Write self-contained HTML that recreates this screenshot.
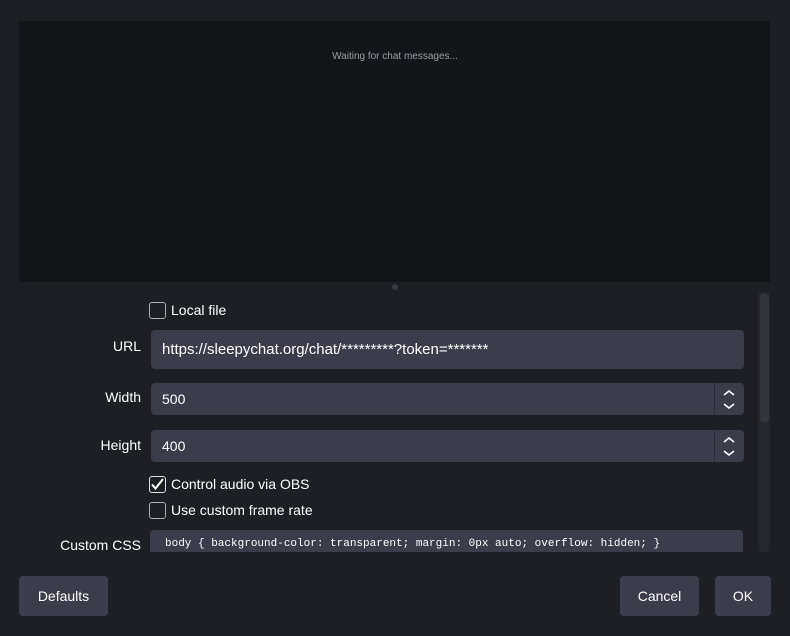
<!DOCTYPE html>
<html><head><style>
*{box-sizing:border-box;margin:0;padding:0}
body{width:790px;height:636px;background:#1e1f24;font-family:"Liberation Sans",sans-serif;color:#fff;position:relative;overflow:hidden;font-size:14px}
.a{position:absolute}
.prev{left:19px;top:21px;width:751px;height:261px;background:#141519}
.inp{background:#3b3d4b;border-radius:4px;height:32px;left:151px;width:593px;padding-left:11px;line-height:32px;font-size:14px}
.lbl{right:649px;font-size:14px;text-align:right}
.cb{width:17px;height:17px;border:1.5px solid #aaa;border-radius:3px;left:149px}
.btn{background:#3b3d4b;border-radius:4px;height:40px;top:576px;line-height:40px;text-align:center;font-size:14px}
.spin{right:46px;width:30px;height:32px;border-left:1px solid #2a2b33;}
</style></head><body>
<div class="a prev"></div>
<div class="a" style="left:0;width:790px;top:51px;text-align:center;font-size:10px;color:#9a9ba3">Waiting for chat messages...</div>
<div class="a" style="left:392px;top:284px;width:6px;height:6px;border-radius:3px;background:#3a3b42"></div>

<div class="a cb" style="top:302px"></div>
<div class="a" style="left:171px;top:302px">Local file</div>

<div class="a lbl" style="top:338px">URL</div>
<div class="a inp" style="top:330px;height:39px;line-height:39px;font-size:15px">https://sleepychat.org/chat/*********?token=*******</div>

<div class="a lbl" style="top:389px">Width</div>
<div class="a inp" style="top:383px">500</div>
<div class="a spin" style="top:383px"><svg width="30" height="32"><path d="M9 12l5-4 5 4M9 21l5 4 5-4" stroke="#fff" stroke-width="1.6" fill="none"/></svg></div>

<div class="a lbl" style="top:437px">Height</div>
<div class="a inp" style="top:430px">400</div>
<div class="a spin" style="top:430px"><svg width="30" height="32"><path d="M9 12l5-4 5 4M9 21l5 4 5-4" stroke="#fff" stroke-width="1.6" fill="none"/></svg></div>

<div class="a cb" style="top:476px;border-color:#ddd"><svg width="15" height="15" style="position:absolute;left:0;top:0"><path d="M2 7.5l3.5 4L13 2" stroke="#fff" stroke-width="2" fill="none"/></svg></div>
<div class="a" style="left:171px;top:476px">Control audio via OBS</div>
<div class="a cb" style="top:502px"></div>
<div class="a" style="left:171px;top:502px">Use custom frame rate</div>

<div class="a lbl" style="top:537px">Custom CSS</div>
<div class="a" style="left:150px;top:530px;width:593px;height:22px;background:#3b3d4b;border-radius:4px 4px 0 0;padding:8px 0 0 15px;font-family:'Liberation Mono',monospace;font-size:11px;line-height:12px;overflow:hidden;white-space:nowrap">body { background-color: transparent; margin: 0px auto; overflow: hidden; }</div>

<div class="a" style="left:758px;top:292px;width:12px;height:260px;background:#26272d;border-radius:4px"></div>
<div class="a" style="left:760px;top:294px;width:9px;height:128px;background:#33353d;border-radius:4px"></div>

<div class="a btn" style="left:19px;width:89px">Defaults</div>
<div class="a btn" style="left:620px;width:79px">Cancel</div>
<div class="a btn" style="left:715px;width:56px">OK</div>
</body></html>
